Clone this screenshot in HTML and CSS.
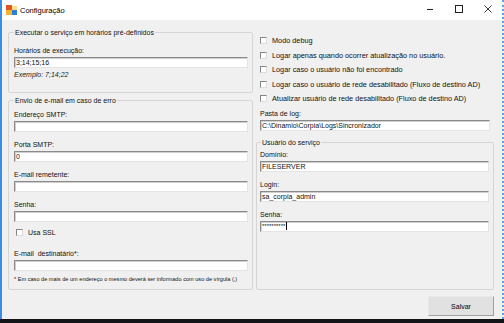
FILE: index.html
```html
<!DOCTYPE html>
<html lang="pt-BR">
<head>
  <meta charset="UTF-8" />
  <title>Configuração</title>
  <link rel="stylesheet" href="styles.css">
</head>
<body>
  <div class="window">
    <header class="titlebar">
      <svg class="app-icon" width="11" height="10" viewBox="0 0 11 10">
        <rect x="0" y="0" width="6" height="5" fill="#e0561f"/>
        <rect x="6" y="1" width="5" height="4" fill="#f6dc8a"/>
        <rect x="0" y="5" width="6" height="5" fill="#f2b530"/>
        <rect x="6" y="5" width="5" height="5" fill="#2f7fd1"/>
      </svg>
      <span class="title">Configuração</span>
      <div class="controls">
        <span class="ctl">
          <svg width="10" height="10" viewBox="0 0 10 10"><line x1="2" y1="5.5" x2="8" y2="5.5" stroke="#222" stroke-width="1"/></svg>
        </span>
        <span class="ctl">
          <svg width="10" height="10" viewBox="0 0 10 10"><rect x="1.5" y="1.5" width="7" height="7" fill="none" stroke="#222" stroke-width="1"/></svg>
        </span>
        <span class="ctl">
          <svg width="10" height="10" viewBox="0 0 10 10"><path d="M1.5 1.5 L8.5 8.5 M8.5 1.5 L1.5 8.5" stroke="#222" stroke-width="0.9"/></svg>
        </span>
      </div>
    </header>

    <main class="client">
      <div class="panes">
        <div class="col-left">
          <fieldset class="group group-schedule">
            <legend>Executar o serviço em horários pré-definidos</legend>
            <label class="lbl">Horários de execução:</label>
            <div class="txt">3;14;15;16</div>
            <p class="hint">Exemplo: 7;14;22</p>
          </fieldset>

          <fieldset class="group group-mail">
            <legend>Envio de e-mail em caso de erro</legend>
            <div class="field">
              <label class="lbl">Endereço SMTP:</label>
              <div class="txt"></div>
            </div>
            <div class="field">
              <label class="lbl">Porta SMTP:</label>
              <div class="txt">0</div>
            </div>
            <div class="field">
              <label class="lbl">E-mail remetente:</label>
              <div class="txt"></div>
            </div>
            <div class="field">
              <label class="lbl">Senha:</label>
              <div class="txt"></div>
            </div>
            <div class="check check-ssl"><span class="box"></span>Usa SSL</div>
            <div class="field field-dest">
              <label class="lbl">E-mail &nbsp;destinatário*:</label>
              <div class="txt"></div>
            </div>
            <p class="note">* Em caso de mais de um endereço o mesmo deverá ser informado com uso de vírgula (,)</p>
          </fieldset>
        </div>

        <div class="col-right">
          <div class="right-top">
            <div class="checks">
              <div class="check"><span class="box"></span>Modo debug</div>
              <div class="check"><span class="box"></span>Logar apenas quando ocorrer atualização no usuário.</div>
              <div class="check"><span class="box"></span>Logar caso o usuário não foi encontrado</div>
              <div class="check"><span class="box"></span>Logar caso o usuário de rede desabilitado (Fluxo de destino AD)</div>
              <div class="check"><span class="box"></span>Atualizar usuário de rede desabilitado (Fluxo de destino AD)</div>
            </div>
            <label class="lbl lbl-log">Pasta de log:</label>
            <div class="txt">C:\Dinamio\Corpia\Logs\Sincronizador</div>
          </div>

          <fieldset class="group group-user">
            <legend>Usuário do serviço</legend>
            <div class="field">
              <label class="lbl">Domínio:</label>
              <div class="txt">FILESERVER</div>
            </div>
            <div class="field">
              <label class="lbl">Login:</label>
              <div class="txt">sa_corpia_admin</div>
            </div>
            <div class="field">
              <label class="lbl">Senha:</label>
              <div class="txt pw"><span class="stars">**********</span><span class="caret"></span></div>
            </div>
          </fieldset>
        </div>
      </div>

      <div class="footer">
        <button class="btn">Salvar</button>
      </div>
    </main>
  </div>
</body>
</html>
```

FILE: styles.css
```css
:root {
  --face: #f0f0f0;
  --group-border: #d5d5d5;
  --text: #111;
  --frame-blue: #3a8ee6;
}

* {
  box-sizing: border-box;
}

body {
  margin: 0;
  background: #121418;
  font-family: "Liberation Sans", Arial, sans-serif;
  font-size: 7px;
  color: var(--text);
}

.window {
  width: 504px;
  height: 319px;
  display: flex;
  flex-direction: column;
  background: var(--face);
  border-left: 2px solid var(--frame-blue);
  border-right: 2px dotted #5aa2ea;
}

/* title bar */
.titlebar {
  height: 20px;
  flex: none;
  background: #fff;
  display: flex;
  align-items: center;
}

.app-icon {
  margin-left: 4px;
}

.title {
  margin-left: 3px;
  font-size: 7.5px;
  color: #000;
}

.controls {
  margin-left: auto;
  display: flex;
  align-self: stretch;
}

.ctl {
  width: 29px;
  display: flex;
  justify-content: center;
  padding-top: 4px;
}

/* client area */
.client {
  flex: 1;
  display: flex;
  flex-direction: column;
  padding: 7.5px 8px 3px 6px;
}

.panes {
  display: grid;
  grid-template-columns: 245px 1fr;
  column-gap: 3px;
}

.col-left {
  display: flex;
  flex-direction: column;
  gap: 3px;
}

.col-right {
  display: flex;
  flex-direction: column;
}

.group {
  margin: 0;
  min-width: 0;
  border: 1px solid var(--group-border);
  border-radius: 2px;
  padding: 0 4.5px 0 5px;
}

.group legend {
  padding: 0 1px;
  line-height: 9px;
}

.group-schedule {
  padding-top: 9px;
  padding-bottom: 13px;
}

.group-mail {
  padding-top: 5.5px;
  padding-bottom: 6px;
}

.group-user {
  flex: 1;
  margin-top: 7px;
  padding: 3px 4px 0 3px;
}

.group-user legend {
  margin-left: 1px;
}

.right-top {
  padding: 8.5px 4px 0 4px;
}

.lbl {
  display: block;
  line-height: 9px;
}

.lbl-log {
  margin-top: 5.5px;
}

.txt {
  margin-top: 2px;
  height: 11px;
  background: #fff;
  border: 1px solid;
  border-color: #8a8a8a #e4e4e4 #e4e4e4 #8a8a8a;
  box-shadow: inset 1px 1px 0 #cfcfcf;
  padding-left: 1px;
  line-height: 9px;
  white-space: nowrap;
  overflow: hidden;
}

.field + .field {
  margin-top: 8px;
}

.field-dest {
  margin-top: 12px;
}

.hint {
  margin: 2px 0 0;
  line-height: 9px;
  font-style: italic;
  color: #222;
}

.note {
  margin: 5px 0 0;
  font-size: 5.6px;
  line-height: 7px;
  white-space: nowrap;
}

/* checkboxes */
.checks {
  display: flex;
  flex-direction: column;
  gap: 5.5px;
  font-size: 7.3px;
}

.check {
  display: flex;
  align-items: center;
  gap: 5px;
  line-height: 9px;
  white-space: nowrap;
}

.check-ssl {
  margin: 5.5px 0 0 2px;
}

.box {
  width: 7px;
  height: 7px;
  flex: none;
  background: #fff;
  border: 1px solid;
  border-color: #858585 #dcdcdc #dcdcdc #858585;
}

/* password box */
.pw {
  display: flex;
  align-items: flex-start;
}

.stars {
  font-size: 6px;
  line-height: 8px;
}

.caret {
  width: 1px;
  height: 8px;
  margin-left: 1px;
  background: #000;
}

/* footer */
.footer {
  display: flex;
  justify-content: flex-end;
  margin-top: 6.5px;
}

.btn {
  width: 66px;
  height: 20px;
  margin: 0;
  padding: 0;
  font-family: inherit;
  font-size: 7px;
  color: #000;
  background: #e1e1e1;
  border: 1px solid;
  border-color: #e8e8e8 #a0a0a0 #a0a0a0 #e8e8e8;
}
```
